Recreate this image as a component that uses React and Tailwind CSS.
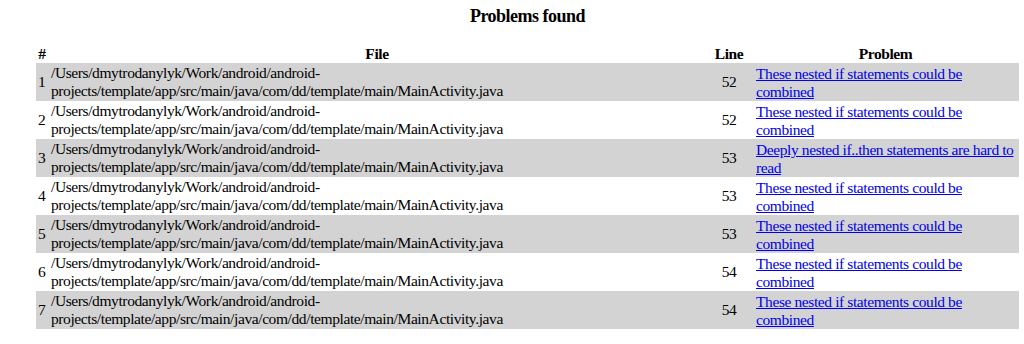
import React from "react";

const FILE =
  "/Users/dmytrodanylyk/Work/android/android-projects/template/app/src/main/java/com/dd/template/main/MainActivity.java";

const NESTED = "These nested if statements could be combined";

const PROBLEMS = [
  { line: 52, text: NESTED },
  { line: 52, text: NESTED },
  { line: 53, text: "Deeply nested if..then statements are hard to read" },
  { line: 53, text: NESTED },
  { line: 53, text: NESTED },
  { line: 54, text: NESTED },
  { line: 54, text: NESTED },
];

export default function App() {
  return (
    <div
      className="bg-white text-black pt-[5px] pl-[36px] min-h-[344px]"
      style={{ fontFamily: '"Liberation Serif", "Times New Roman", serif' }}
    >
      <div className="w-[983px]">
        <h3 className="text-[18px] leading-[22px] tracking-[-0.5px] font-bold text-center">
          Problems found
        </h3>

        <table className="mt-[17px] w-[983px] table-fixed text-[15.5px] leading-[18px] tracking-[-0.4px]">
          <colgroup>
            <col className="w-[12px]" />
            <col className="w-[658px]" />
            <col className="w-[46px]" />
            <col className="w-[267px]" />
          </colgroup>
          <thead>
            <tr className="h-[19px]">
              <th className="p-0 text-center font-bold">#</th>
              <th className="p-0 text-center font-bold">File</th>
              <th className="p-0 text-center font-bold">Line</th>
              <th className="p-0 text-center font-bold">Problem</th>
            </tr>
          </thead>
          <tbody>
            {PROBLEMS.map((p, i) => (
              <tr
                key={i}
                className={`h-[38px] ${i % 2 === 0 ? "bg-[#d3d3d3]" : "bg-white"}`}
              >
                <td className="py-[1px] pl-[2px] align-middle">{i + 1}</td>
                <td className="py-[1px] pl-[3px] pr-[2px] align-middle">{FILE}</td>
                <td className="py-[1px] text-center align-middle">{p.line}</td>
                <td className="pt-[2px] pb-0 pl-[4px] pr-[2px] align-middle">
                  <a href="#" className="text-[#0000ee] underline">
                    {p.text}
                  </a>
                </td>
              </tr>
            ))}
          </tbody>
        </table>
      </div>
    </div>
  );
}
